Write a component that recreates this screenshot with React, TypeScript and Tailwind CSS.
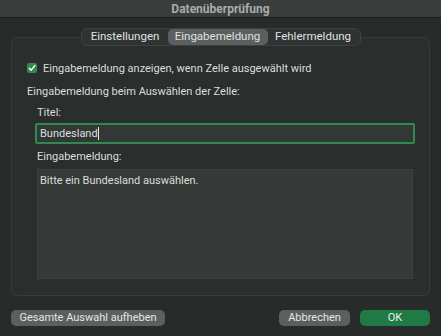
import React from "react";

export default function App() {
  return (
    <div
      className="w-[441px] h-[336px] flex flex-col bg-[#272b2a] text-[#dcdedd] overflow-hidden"
      style={{ fontFamily: "Roboto, 'Noto Sans', sans-serif" }}
    >
      <div className="h-[18px] shrink-0 bg-[#393d3b] border-b border-[#1d201f] flex items-center justify-center">
        <span className="text-[12px] font-bold text-[#a9acab] leading-none">Datenüberprüfung</span>
      </div>
      <div className="flex flex-col px-[11px] pt-[10px]">
        <div className="self-center relative z-10 -mb-[9px] h-[18px] w-[280px] flex items-center rounded-[6px] bg-[#2f3332] border border-[#3d4140] px-[1px] text-[11.5px] text-[#dfe1e0]">
          <div className="w-[85px] h-[16px] flex items-center justify-center">Einstellungen</div>
          <div className="w-[100px] h-[16px] flex items-center justify-center rounded-[5px] bg-[#5b605e]">Eingabemeldung</div>
          <div className="flex-1 h-[16px] flex items-center justify-center">Fehlermeldung</div>
        </div>
        <div className="h-[259px] rounded-[6px] border border-[#383c3b] bg-[#2a2e2d] flex flex-col pl-[15px] pr-[14px] pt-[24px] text-[11px]">
          <div className="flex items-center h-[12px] gap-[6px]">
            <div className="w-[10px] h-[10px] rounded-[2px] bg-[#2f8a4e] flex items-center justify-center">
              <svg width="8" height="8" viewBox="0 0 8 8" fill="none">
                <path d="M1.3 4.2 L3.2 6.1 L6.8 1.6" stroke="#ffffff" strokeWidth="1.5" strokeLinecap="round" strokeLinejoin="round" />
              </svg>
            </div>
            <span className="leading-none">Eingabemeldung anzeigen, wenn Zelle ausgewählt wird</span>
          </div>
          <div className="mt-[11px] leading-none h-[12px] flex items-center">Eingabemeldung beim Auswählen der Zelle:</div>
          <div className="pl-[10px] flex flex-col">
            <div className="mt-[9px] leading-none h-[12px] flex items-center">Titel:</div>
            <div className="mt-[5px] -ml-[2px] h-[21px] w-[380px] rounded-[2px] border-2 border-[#2e8a4f] bg-[#333836] flex items-center pl-[3px]">
              <span className="leading-none">Bundesland</span>
              <span className="w-[1px] h-[13px] bg-[#e5e5e5]" />
            </div>
            <div className="mt-[6px] leading-none h-[12px] flex items-center">Eingabemeldung:</div>
            <div className="mt-[7px] h-[110px] w-[376px] bg-[#353a38] border border-[#3c403f] pl-[2px] pt-[3px]">
              <span className="leading-none">Bitte ein Bundesland auswählen.</span>
            </div>
          </div>
        </div>
        <div className="mt-[14px] flex items-center text-[11px]">
          <div className="w-[154px] h-[16px] rounded-[5px] bg-[#5b605e] flex items-center justify-center text-[#e4e6e5]">Gesamte Auswahl aufheben</div>
          <div className="flex-1" />
          <div className="w-[71px] h-[16px] rounded-[5px] bg-[#5b605e] flex items-center justify-center text-[#e4e6e5]">Abbrechen</div>
          <div className="ml-[10px] w-[70px] h-[16px] rounded-[5px] bg-[#1f7a45] flex items-center justify-center text-[#eef2ef]">OK</div>
        </div>
      </div>
    </div>
  );
}
